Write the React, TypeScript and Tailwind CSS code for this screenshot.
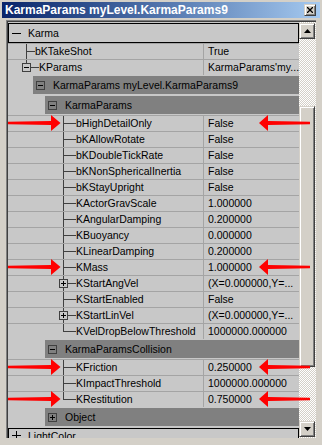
import React from 'react'

type Item = { name: string; value: string; box?: boolean }

const karmaParams: Item[] = [
  { name: 'bHighDetailOnly', value: 'False' },
  { name: 'bKAllowRotate', value: 'False' },
  { name: 'bKDoubleTickRate', value: 'False' },
  { name: 'bKNonSphericalInertia', value: 'False' },
  { name: 'bKStayUpright', value: 'False' },
  { name: 'KActorGravScale', value: '1.000000' },
  { name: 'KAngularDamping', value: '0.200000' },
  { name: 'KBuoyancy', value: '0.000000' },
  { name: 'KLinearDamping', value: '0.200000' },
  { name: 'KMass', value: '1.000000' },
  { name: 'KStartAngVel', value: '(X=0.000000,Y=...', box: true },
  { name: 'KStartEnabled', value: 'False' },
  { name: 'KStartLinVel', value: '(X=0.000000,Y=...', box: true },
  { name: 'KVelDropBelowThreshold', value: '1000000.000000' },
]

const collision: Item[] = [
  { name: 'KFriction', value: '0.250000' },
  { name: 'KImpactThreshold', value: '1000000.000000' },
  { name: 'KRestitution', value: '0.750000' },
]

// 9x9 expander box, minus or plus
const Expander = ({ x = 0, y = 0, plus = false }: { x?: number; y?: number; plus?: boolean }) => (
  <g>
    <rect x={x + 0.5} y={y + 0.5} width={8} height={8} fill="none" stroke="#404040" />
    <rect x={x + 2} y={y + 4} width={5} height={1} fill="#000" />
    {plus && <rect x={x + 4} y={y + 2} width={1} height={5} fill="#000" />}
  </g>
)

const Row = ({
  gutter,
  lineX,
  last,
  box,
  plus,
  name,
  value,
}: {
  gutter: number
  lineX: number
  last?: boolean
  box?: boolean
  plus?: boolean
  name: string
  value: string
}) => (
  <div className="flex h-[16px] shrink-0 border-t border-[#a4a4a4]">
    <div className="flex w-[195px] shrink-0 items-center overflow-hidden">
      <svg className="-mt-px shrink-0 self-start" width={gutter} height={16}>
        <rect x={lineX} y={0} width={1} height={last ? 9 : 16} fill="#404040" />
        <rect x={box ? lineX + 4 : lineX} y={8} width={box ? gutter - lineX - 4 : gutter - lineX} height={1} fill="#404040" />
        {box && (
          <>
            <rect x={lineX - 4} y={4} width={9} height={9} fill="#c8c8c8" />
            <Expander x={lineX - 4} y={4} plus={plus} />
          </>
        )}
      </svg>
      <span className="whitespace-nowrap leading-none">{name}</span>
    </div>
    <div className="flex flex-1 items-center overflow-hidden whitespace-nowrap border-l border-[#a4a4a4] pl-[4px] leading-none">
      {value}
    </div>
  </div>
)

const Category = ({ indent, label, plus }: { indent: string; label: string; plus?: boolean }) => (
  <div className="flex h-[20px] shrink-0 py-px">
    <div className={`${indent} flex flex-1 items-center bg-[#808080]`}>
      <svg className="ml-[3px] shrink-0" width={9} height={9}>
        <Expander plus={plus} />
      </svg>
      <span className="ml-[8px] whitespace-nowrap leading-none">{label}</span>
    </div>
  </div>
)

const TopCategory = ({ label, plus, top }: { label: string; plus?: boolean; top?: boolean }) => (
  <div className="h-[21px] shrink-0 pt-px">
    <div
      className={`flex h-[20px] border border-black bg-[#c8c8c8] ${top ? 'items-start pt-[2px]' : 'items-center'}`}
    >
      <svg className="ml-[3px] shrink-0" width={9} height={9}>
        <rect x={0} y={4} width={9} height={1} fill="#000" />
        {plus && <rect x={4} y={0} width={1} height={9} fill="#000" />}
      </svg>
      <span className="ml-[7px] whitespace-nowrap leading-none">{label}</span>
    </div>
  </div>
)

const raised =
  'border border-t-[#d4d0c8] border-l-[#d4d0c8] border-r-[#404040] border-b-[#404040] bg-[#d4d0c8] shadow-[inset_1px_1px_#ffffff,inset_-1px_-1px_#808080]'

const RightArrow = ({ top }: { top: number }) => (
  <svg className="absolute left-[8px]" style={{ top }} width={53} height={16}>
    <path d="M0 6.8 L43 6 L43 0 L52.5 8 L43 16 L43 10 L0 9.2 Z" fill="#ff0000" />
  </svg>
)

const LeftArrow = ({ top }: { top: number }) => (
  <svg className="absolute left-[259px]" style={{ top }} width={51} height={16}>
    <path d="M51 6.8 L9 6 L9 0 L0 8 L9 16 L9 10 L51 9.2 Z" fill="#ff0000" />
  </svg>
)

export default function App() {
  return (
    <div className="relative flex h-[445px] w-[322px] flex-col overflow-hidden bg-[#d4d0c8] font-['Liberation_Sans',Arial,sans-serif] text-[10.5px] text-black">
      {/* title bar */}
      <div className="px-[2px] pt-[2px]">
        <div className="flex h-[16px] items-center bg-gradient-to-r from-[#0a246a] to-[#a6caf0] pl-[3px] pr-[4px]">
          <span className="flex-1 whitespace-nowrap text-[12px] font-bold leading-none text-white">
            KarmaParams myLevel.KarmaParams9
          </span>
          <div className={`${raised} flex h-[12px] w-[12px] items-center justify-center`}>
            <svg width={6} height={6}>
              <path d="M0 0 L6 6 M6 0 L0 6" stroke="#000" strokeWidth={1.3} />
            </svg>
          </div>
        </div>
      </div>

      {/* property panel */}
      <div className="mt-[2px] px-[6px]">
        <div className="flex h-[418px] border-l border-t border-[#808080] pl-px pt-px shadow-[inset_1px_1px_#404040]">
          <div className="flex w-[291px] shrink-0 flex-col overflow-hidden bg-[#c8c8c8]">
            <TopCategory label="Karma" />
            <Row gutter={27} lineX={18} name="bKTakeShot" value="True" />
            <Row gutter={31} lineX={18} last box name="KParams" value="KarmaParams'my..." />
            <Category indent="ml-[25px]" label="KarmaParams myLevel.KarmaParams9" />
            <Category indent="ml-[37px]" label="KarmaParams" />
            {karmaParams.map((p, i) => (
              <Row
                key={p.name}
                gutter={68}
                lineX={55}
                last={i === karmaParams.length - 1}
                box={p.box}
                plus={p.box}
                name={p.name}
                value={p.value}
              />
            ))}
            <Category indent="ml-[37px]" label="KarmaParamsCollision" />
            {collision.map((p, i) => (
              <Row
                key={p.name}
                gutter={68}
                lineX={55}
                last={i === collision.length - 1}
                name={p.name}
                value={p.value}
              />
            ))}
            <Category indent="ml-[37px]" label="Object" plus />
            <TopCategory label="LightColor" plus top />
          </div>

          {/* scrollbar */}
          <div className="flex w-[17px] shrink-0 flex-col bg-[repeating-conic-gradient(#ffffff_0%_25%,#d4d0c8_0%_50%)] bg-[length:2px_2px]">
            <div className={`${raised} mt-px flex h-[16px] w-[16px] shrink-0 items-center justify-center`}>
              <svg width={7} height={4}>
                <path d="M3.5 0 L7 4 L0 4 Z" fill="#000" />
              </svg>
            </div>
            <div className="h-[67px] shrink-0" />
            <div className={`${raised} h-[261px] w-[16px] shrink-0`} />
            <div className="flex-1" />
            <div className={`${raised} mb-px flex h-[16px] w-[16px] shrink-0 items-center justify-center`}>
              <svg width={7} height={4}>
                <path d="M0 0 L7 0 L3.5 4 Z" fill="#000" />
              </svg>
            </div>
          </div>
        </div>
      </div>

      <RightArrow top={115} />
      <RightArrow top={259} />
      <RightArrow top={359} />
      <RightArrow top={391} />
      <LeftArrow top={115} />
      <LeftArrow top={259} />
      <LeftArrow top={359} />
      <LeftArrow top={391} />
    </div>
  )
}
